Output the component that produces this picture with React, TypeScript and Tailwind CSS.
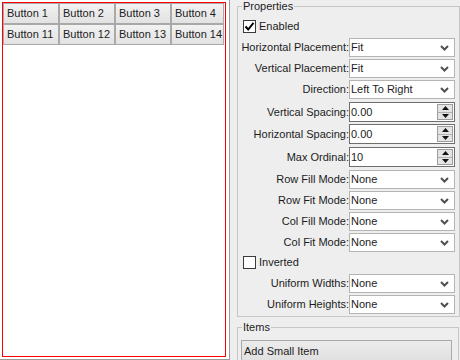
import React from "react";

const Chevron = () => (
  <svg width="9" height="6" viewBox="0 0 9 6" className="block">
    <polyline points="1,1 4.5,4.5 8,1" fill="none" stroke="#505050" strokeWidth="2" />
  </svg>
);

const Select = ({ value }: { value: string }) => (
  <div className="w-[106px] h-[19px] bg-white border border-[#b4b4b4] flex items-center justify-between pl-[1px] pr-[5px] leading-none">
    <span>{value}</span>
    <Chevron />
  </div>
);

const Spinner = ({ value }: { value: string }) => (
  <div className="w-[106px] h-[20px] bg-white border border-[#6e6e6e] flex items-center pl-[1px] pr-[1px] leading-none">
    <span className="flex-1">{value}</span>
    <div className="w-[16px] h-[16px] flex flex-col border border-[#9c9c9c] bg-[#e4e4e4]">
      <div className="flex-1 flex items-center justify-center border-b border-[#b0b0b0]">
        <svg width="7" height="4" viewBox="0 0 7 4" className="block">
          <polygon points="0,4 3.5,0 7,4" fill="#111" />
        </svg>
      </div>
      <div className="flex-1 flex items-center justify-center">
        <svg width="7" height="4" viewBox="0 0 7 4" className="block">
          <polygon points="0,0 3.5,4 7,0" fill="#111" />
        </svg>
      </div>
    </div>
  </div>
);

const Label = ({ children }: { children: React.ReactNode }) => (
  <div className="w-[111px] text-right whitespace-nowrap leading-none">{children}</div>
);

const Check = ({ checked, label }: { checked: boolean; label: string }) => (
  <div className="flex items-center h-[13px] pl-[5px]">
    <div className="w-[13px] h-[13px] bg-white border border-[#3a3a3a] flex items-center justify-center">
      {checked && (
        <svg width="11" height="11" viewBox="0 0 11 11" className="block">
          <polyline points="1.5,5.5 4.2,8.5 9.5,1.8" fill="none" stroke="#000" strokeWidth="2" />
        </svg>
      )}
    </div>
    <span className="ml-[3px] leading-none">{label}</span>
  </div>
);

const Btn = ({ label, last }: { label: string; last?: boolean }) => (
  <div
    className={
      last
        ? "w-[53px] h-[21px] border border-[#a9a9a9] bg-gradient-to-b from-[#f2f2f2] to-[#e2e2e2] flex items-center pl-[3px] leading-none whitespace-nowrap overflow-hidden"
        : "w-[56px] h-[21px] border border-[#a9a9a9] bg-gradient-to-b from-[#f2f2f2] to-[#e2e2e2] flex items-center pl-[3px] leading-none whitespace-nowrap overflow-hidden"
    }
  >
    {label}
  </div>
);

export default function App() {
  return (
    <div className="w-[460px] h-[360px] flex bg-[#eeeeee] text-[11px] text-[#1c1c1c] font-['Liberation_Sans',Arial,sans-serif] overflow-hidden">
      <div className="w-[230px] h-[360px] bg-white border-r border-b border-[#9a9a9a] shrink-0">
        <div className="mt-[2px] ml-[2px] w-[224px] h-[355px] border border-[#ff0000]">
          <div className="flex">
            <Btn label="Button 1" />
            <Btn label="Button 2" />
            <Btn label="Button 3" />
            <Btn label="Button 4" last />
          </div>
          <div className="flex">
            <Btn label="Button 11" />
            <Btn label="Button 12" />
            <Btn label="Button 13" />
            <Btn label="Button 14" last />
          </div>
        </div>
      </div>
      <div className="flex-1 pl-[7px]">
        <fieldset className="w-[223px] h-[317px] border border-[#c6c6c6]">
          <legend className="ml-[4px] px-[1px] leading-[13px]">Properties</legend>
          <div className="mt-[7px]">
            <Check checked label="Enabled" />
          </div>
          <div className="mt-[5px] flex items-center">
            <Label>Horizontal Placement:</Label>
            <Select value="Fit" />
          </div>
          <div className="mt-[2px] flex items-center">
            <Label>Vertical Placement:</Label>
            <Select value="Fit" />
          </div>
          <div className="mt-[2px] flex items-center">
            <Label>Direction:</Label>
            <Select value="Left To Right" />
          </div>
          <div className="mt-[3px] flex items-center">
            <Label>Vertical Spacing:</Label>
            <Spinner value="0.00" />
          </div>
          <div className="mt-[2px] flex items-center">
            <Label>Horizontal Spacing:</Label>
            <Spinner value="0.00" />
          </div>
          <div className="mt-[3px] flex items-center">
            <Label>Max Ordinal:</Label>
            <Spinner value="10" />
          </div>
          <div className="mt-[3px] flex items-center">
            <Label>Row Fill Mode:</Label>
            <Select value="None" />
          </div>
          <div className="mt-[2px] flex items-center">
            <Label>Row Fit Mode:</Label>
            <Select value="None" />
          </div>
          <div className="mt-[2px] flex items-center">
            <Label>Col Fill Mode:</Label>
            <Select value="None" />
          </div>
          <div className="mt-[2px] flex items-center">
            <Label>Col Fit Mode:</Label>
            <Select value="None" />
          </div>
          <div className="mt-[4px]">
            <Check checked={false} label="Inverted" />
          </div>
          <div className="mt-[5px] flex items-center">
            <Label>Uniform Widths:</Label>
            <Select value="None" />
          </div>
          <div className="mt-[2px] flex items-center">
            <Label>Uniform Heights:</Label>
            <Select value="None" />
          </div>
        </fieldset>
        <fieldset className="mt-[4px] w-[222px] h-[60px] border border-[#c6c6c6]">
          <legend className="ml-[4px] px-[1px] leading-[13px]">Items</legend>
          <div className="mt-[6px] ml-[3px] w-[211px] h-[22px] border border-[#a9a9a9] bg-gradient-to-b from-[#ececec] to-[#e0e0e0] flex items-center pl-[2px] leading-none">
            Add Small Item
          </div>
        </fieldset>
      </div>
    </div>
  );
}
